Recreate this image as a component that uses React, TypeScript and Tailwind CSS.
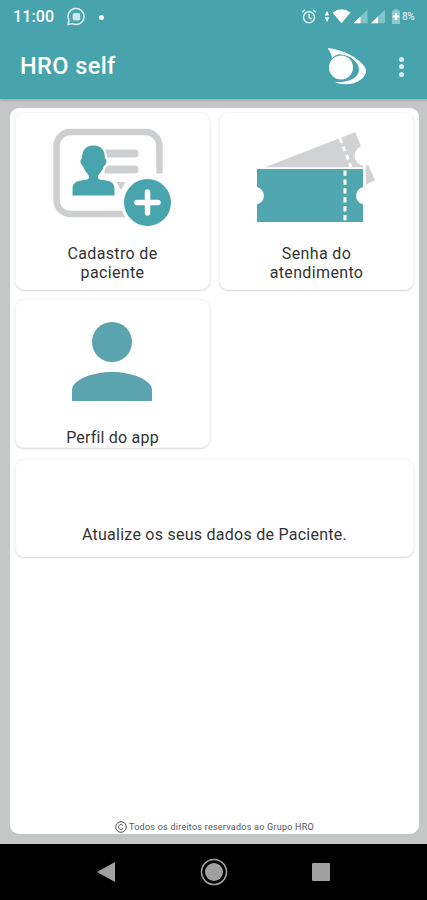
import React from "react";

function StatusBar() {
  return (
    <div className="flex h-[34px] items-center justify-between pl-[13px] pr-[11px] text-white">
      <div className="flex items-center">
        <span className="w-[42px] whitespace-nowrap text-[16px] font-medium leading-[34px] tracking-[0.1px]">11:00</span>
        <svg className="ml-[11px]" width="20" height="20" viewBox="0 0 20 20" fill="none">
          <path d="M2 17.5 3 13.2A8 8 0 1 1 6.5 16.6Z" stroke="#d9eff1" strokeWidth="1.5" />
          <rect x="6.6" y="6" width="7.6" height="7.6" rx="2" fill="#c9e8eb" />
        </svg>
        <span className="ml-[13px] size-[5px] rounded-full bg-white" />
      </div>
      <div className="flex items-center">
        <svg width="90" height="20" viewBox="0 0 90 20" fill="none">
          <circle cx="9" cy="10.3" r="5.5" stroke="#e3f4f5" strokeWidth="1.5" />
          <path d="M9 7v3.5l2.6 1.7M2.3 5.2 5 2.8M15.7 5.2 13 2.8" stroke="#e3f4f5" strokeWidth="1.4" />
          <path d="M24.7 8.4 27 3.7l2.3 4.7ZM24.7 10.2h4.6L27 14.9Z" fill="#fff" />
          <path d="M32.5 5.5Q41.5-.8 50.5 5.5L41.5 16.3Z" fill="#fff" />
          <path d="M53.5 16.3 67.5 2.7V16.3ZM71 16.3 85 2.7V16.3Z" fill="#83c3ca" />
          <path d="M53.5 16.3 60.5 9.4V16.3ZM71 16.3 78 9.4V16.3Z" fill="#fff" />
        </svg>
        <svg className="ml-[2px]" width="8" height="20" viewBox="0 0 8 20">
          <path d="M0 3.8h2V2.2h4v1.6h2V17H0Z" fill="#8fc8cd" />
          <path d="M3 6h2v2.5h2.3v2H5V13H3v-2.5H.7v-2H3Z" fill="#fff" />
        </svg>
        <span className="ml-[2px] w-[14px] whitespace-nowrap text-[10px] font-medium leading-5 tracking-[-0.4px] text-[#d3ecee]">8%</span>
      </div>
    </div>
  );
}

function AppBar() {
  return (
    <div className="flex h-[65px] items-center pl-5 text-white">
      <h1 className="w-[308px] text-[23.5px] font-medium leading-[65px] tracking-[0.42px]">HRO self</h1>
      <svg width="40" height="38" viewBox="0 0 40 38" fill="#fff">
        <path fillRule="evenodd" d="M-.5 0C16 2 29 9 36.5 18.500C42 26 32 36.300 18 36.300c-5 0-8-1-11-2.300C20 35 31 30 31 21.500 31 14 22 7 13 6.400c-4-.3-7 1.600-9 4.100C4 7 1.500 3-.5 0Z" />
        <circle cx="13" cy="19.600" r="12" />
      </svg>
      <div className="ml-[31px] flex flex-col gap-[2.5px]">
        <span className="size-[5px] rounded-full bg-[#d9eff1]" />
        <span className="size-[5px] rounded-full bg-[#d9eff1]" />
        <span className="size-[5px] rounded-full bg-[#d9eff1]" />
      </div>
    </div>
  );
}

function RegisterIcon() {
  return (
    <svg className="mx-auto block" width="120" height="100" viewBox="0.5 0 120 100">
      <rect x="4" y="4" width="103" height="82" rx="14" fill="none" stroke="#cecfd1" strokeWidth="6.500" />
      <path d="M52 21.500H82a4 4 0 0 1 4 4 4 4 0 0 1-4 4H52ZM52 37.500H82a4 4 0 0 1 4 4 4 4 0 0 1-4 4H52ZM64 54h9l-4.500 8Z" fill="#cecfd1" />
      <path d="M41 17.500c8 0 11.500 5 11.500 13 2.500 1 1.800 6-1.300 8-1.500 6-5.700 7-5.700 11 0 3.500 7 2 12 4 3.500 1.500 4.500 4.500 4.500 7.500v6.500H20V61c0-3 1-6 4.500-7.500 5-2 12-.5 12-4 0-4-4.200-5-5.700-11-3.100-2-3.800-7-1.300-8 0-8 3.500-13 11.500-13Z" fill="#48a5ae" stroke="#fff" strokeWidth="4" paintOrder="stroke" />
      <circle cx="95" cy="74.500" r="26.500" fill="#fff" />
      <path d="M99 45.500h12v12H99Z" fill="#fff" />
      <circle cx="95" cy="74.500" r="23.500" fill="#48a5ae" />
      <path d="M95 64v21M84.500 74.500h21" stroke="#fff" strokeWidth="5.500" strokeLinecap="round" />
    </svg>
  );
}

function TicketIcon() {
  return (
    <svg className="mx-auto block" width="120" height="94" viewBox="0 0 120 94">
      <path d="m8 35.200 90-35 6 14a10 10 0 0 0 7.500 19l6.500 15-9.500 4.500V35.200Z" fill="#d1d2d4" />
      <path d="M106.300 34h2.200v19h-2.200Z" fill="#fff" />
      <path d="m83 6 11 29" stroke="#fff" strokeWidth="3" strokeDasharray="5 4" />
      <path d="M0 37h106v18a9 9 0 0 0 0 17.500V90H0V72.500A9 9 0 0 0 0 55Z" fill="#50a7b0" />
      <path d="M88 38.500V90" stroke="#fff" strokeWidth="3" strokeDasharray="5.300 3.600" />
    </svg>
  );
}

function ProfileIcon() {
  return (
    <svg className="mx-auto block" width="82" height="80" viewBox="0 0 82 80" fill="#5ba3af">
      <circle cx="40" cy="20" r="20" />
      <path d="M0 79V68C0 58 20 50 40 50s40 8 40 18v11Z" />
    </svg>
  );
}

const cardClass = "rounded-[9px] border border-[#f7f7f7] bg-white shadow-[0_1px_2px_rgba(0,0,0,0.16)]";
const labelClass = "text-center text-[16px] leading-[19px] text-[#333]";

export default function App() {
  return (
    <div className="flex h-[900px] w-[427px] flex-col overflow-hidden bg-[#c5c6c6] font-['Roboto',sans-serif]">
      <header className="h-[99px] shrink-0 bg-[#48a4ac] shadow-[0_1px_3px_rgba(0,0,0,0.2)]">
        <StatusBar />
        <AppBar />
      </header>
      <main className="mb-[10px] ml-[10px] mr-[8px] mt-[9px] flex h-[726px] shrink-0 flex-col rounded-[9px] bg-white px-[5px] pt-[4px]">
        <div className="grid grid-cols-[195px_195px] gap-x-[9px] gap-y-[9px]">
          <section className={`${cardClass} h-[178px] pt-[15px]`}>
            <RegisterIcon />
            <p className={`${labelClass} mt-[16px] tracking-[0.36px]`}>Cadastro de<br />paciente</p>
          </section>
          <section className={`${cardClass} h-[178px] pt-[19px]`}>
            <TicketIcon />
            <p className={`${labelClass} mt-[18px] tracking-[0.36px]`}>Senha do<br />atendimento</p>
          </section>
          <section className={`${cardClass} h-[149px] pt-[22px]`}>
            <ProfileIcon />
            <p className={`${labelClass} mt-[26px] tracking-[0.2px]`}>Perfil do app</p>
          </section>
        </div>
        <section className={`${cardClass} mt-[11px] flex h-[98px] w-[399px] items-end justify-center pb-[12px]`}>
          <p className={`${labelClass} tracking-[0.26px]`}>Atualize os seus dados de Paciente.</p>
        </section>
        <footer className="mb-[1px] mt-auto flex h-[12px] items-center justify-center gap-[2px] text-[#555]">
          <svg width="12" height="12" viewBox="0 0 12 12" fill="none" stroke="currentColor">
            <circle cx="6" cy="6" r="5.300" />
            <path d="M8 4.500a2.500 2.500 0 1 0 0 3" />
          </svg>
          <span className="whitespace-nowrap text-[9px] leading-[12px] tracking-[0.25px]">Todos os direitos reservados ao Grupo HRO</span>
        </footer>
      </main>
      <nav className="flex h-[56px] shrink-0 items-center bg-black pl-[97px] text-[#a0a0a0]">
        <svg width="18" height="20" viewBox="0 0 18 20" fill="currentColor"><path d="M0 10 18 0v20Z" /></svg>
        <svg className="ml-[85px]" width="28" height="28" viewBox="0 0 28 28">
          <circle cx="14" cy="14" r="12.500" fill="none" stroke="currentColor" strokeWidth="1.600" />
          <circle cx="14" cy="14" r="9" fill="currentColor" />
        </svg>
        <span className="ml-[84px] size-[18px] rounded-[1px] bg-[#a0a0a0]" />
      </nav>
    </div>
  );
}
